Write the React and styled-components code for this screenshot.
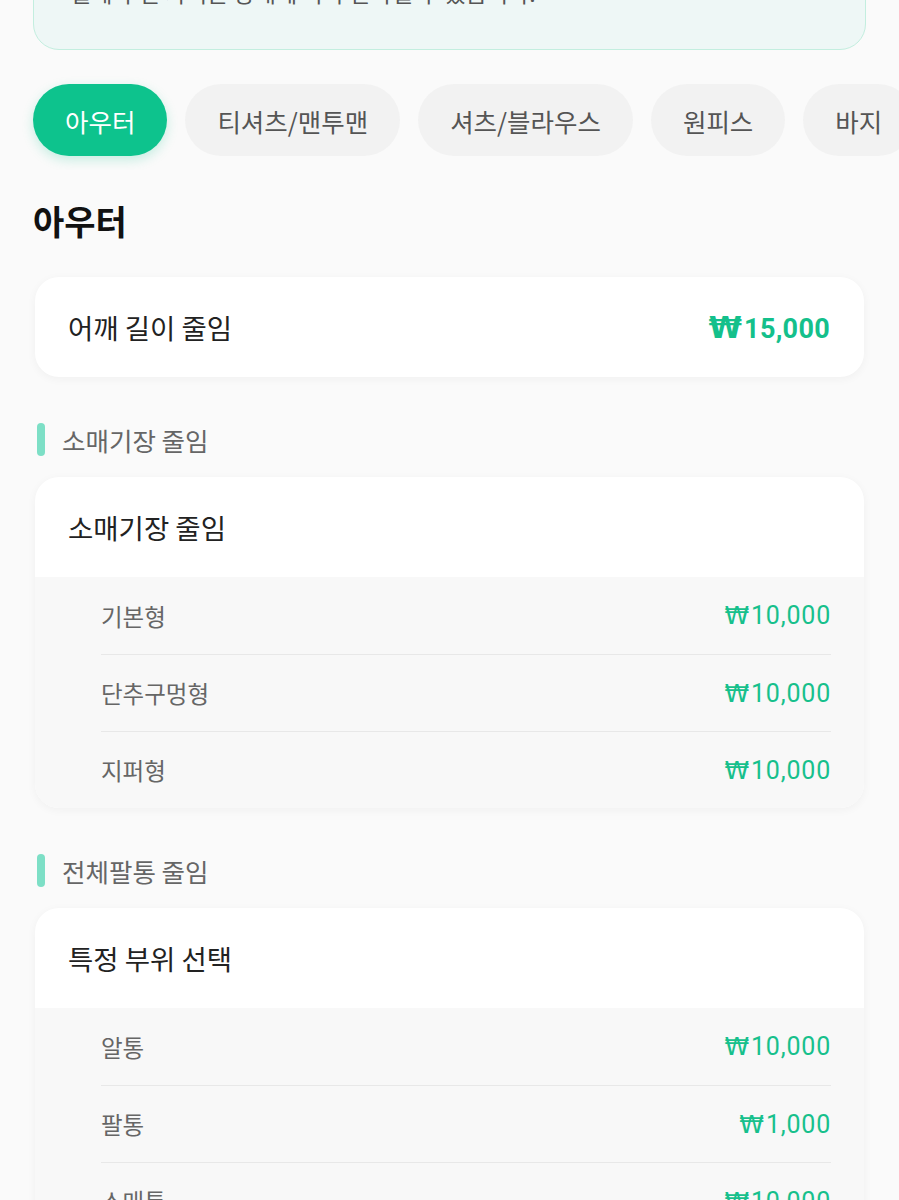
import styled, { createGlobalStyle } from "styled-components"

const GlobalStyle = createGlobalStyle`
  * { box-sizing: border-box; }
  body {
    margin: 0;
    background: #FAFAFA;
    font-family: "Noto Sans CJK KR", "Noto Sans", sans-serif;
    overflow-x: hidden;
  }
`

const categories = ["아우터", "티셔츠/맨투맨", "셔츠/블라우스", "원피스", "바지", "스커트"]

const sections = [
  {
    label: "소매기장 줄임",
    title: "소매기장 줄임",
    items: [
      { name: "기본형", price: "10,000" },
      { name: "단추구멍형", price: "10,000" },
      { name: "지퍼형", price: "10,000" },
    ],
  },
  {
    label: "전체팔통 줄임",
    title: "특정 부위 선택",
    items: [
      { name: "알통", price: "10,000" },
      { name: "팔통", price: "1,000" },
      { name: "소매통", price: "10,000" },
    ],
  },
]

export default function App() {
  return (
    <>
      <GlobalStyle />
      <Page>
        <Notice>
          <p>수선 전 옷의 소재와 디자인을 꼭 확인해 주세요.</p>
          <p>실제 수선 가격은 상태에 따라 달라질 수 있습니다.</p>
        </Notice>

        <ChipRow>
          {categories.map((c, i) => (
            <Chip key={c} $active={i === 0}>{c}</Chip>
          ))}
        </ChipRow>

        <Heading>아우터</Heading>

        <PriceCard>
          <span>어깨 길이 줄임</span>
          <Price><Won $size={30}>₩</Won>15,000</Price>
        </PriceCard>

        {sections.map((s) => (
          <div key={s.label}>
            <SectionLabel>{s.label}</SectionLabel>
            <OptionCard>
              <OptionHeader>{s.title}</OptionHeader>
              <OptionList>
                {s.items.map((item) => (
                  <OptionRow key={item.name}>
                    <span>{item.name}</span>
                    <SubPrice><Won $size={25} $gap={1}>₩</Won>{item.price}</SubPrice>
                  </OptionRow>
                ))}
              </OptionList>
            </OptionCard>
          </div>
        ))}
      </Page>
    </>
  )
}

const Page = styled.div`
  padding: 0 33px 60px;
`

const Notice = styled.div`
  margin-top: -84px;
  padding: 24px 36px 40px;
  background: #EEF7F6;
  border: 1.5px solid #C3EEDF;
  border-radius: 26px;

  p {
    margin: 0;
    font-size: 23px;
    line-height: 34px;
    color: #555555;
  }
`

const ChipRow = styled.div`
  display: flex;
  gap: 18px;
  margin: 22px -33px 0 -12px;
  padding: 12px 0 14px 12px;
  overflow: hidden;
`

const Chip = styled.button`
  flex: none;
  height: 72px;
  padding: 0 32px;
  border: none;
  border-radius: 36px;
  font-family: inherit;
  font-size: 25.5px;
  background: ${(p) => (p.$active ? "#0DC38D" : "#F2F2F2")};
  color: ${(p) => (p.$active ? "#FFFFFF" : "#555555")};
  box-shadow: ${(p) => (p.$active ? "0 4px 12px rgba(13, 195, 141, 0.22)" : "none")};
`

const Heading = styled.h2`
  margin: 28px 0 34px;
  font-size: 34px;
  line-height: 45px;
  font-weight: 700;
  color: #111111;
`

const card = `
  background: #FFFFFF;
  border-radius: 24px;
  margin: 0 2px;
  box-shadow: 0 2px 10px rgba(0, 0, 0, 0.045);
`

const PriceCard = styled.div`
  ${card}
  height: 100px;
  padding: 0 34px 0 33px;
  display: flex;
  align-items: center;
  justify-content: space-between;
  font-size: 27.5px;
  color: #222222;
`

const Won = styled.span`
  font-family: "DejaVu Sans", sans-serif;
  font-size: ${(p) => p.$size}px;
  margin-right: ${(p) => p.$gap ?? 2}px;
`

const Price = styled.span`
  font-family: Roboto, "Noto Sans CJK KR", sans-serif;
  font-size: 27px;
  font-weight: 700;
  color: #14C08B;
  letter-spacing: 0.3px;
`

const SectionLabel = styled.div`
  display: flex;
  align-items: center;
  gap: 17px;
  margin: 46px 0 21px 4px;
  height: 33px;
  font-size: 25.5px;
  color: #666666;

  &::before {
    content: "";
    width: 8px;
    height: 33px;
    border-radius: 4px;
    background: #7DDFC6;
  }
`

const OptionCard = styled.div`
  ${card}
  overflow: hidden;
`

const OptionHeader = styled.div`
  height: 100px;
  padding: 0 33px;
  display: flex;
  align-items: center;
  font-size: 27.5px;
  color: #222222;
`

const OptionList = styled.div`
  background: #F8F8F8;
  padding: 0 33px 0 66px;
`

const OptionRow = styled.div`
  height: 77px;
  display: flex;
  align-items: center;
  justify-content: space-between;
  font-size: 23.5px;
  color: #666666;

  & + & {
    border-top: 1px solid #E8E8E8;
  }
`

const SubPrice = styled.span`
  font-family: Roboto, "Noto Sans CJK KR", sans-serif;
  font-size: 25px;
  font-weight: 400;
  color: #17C08C;
  letter-spacing: 0.8px;
`
